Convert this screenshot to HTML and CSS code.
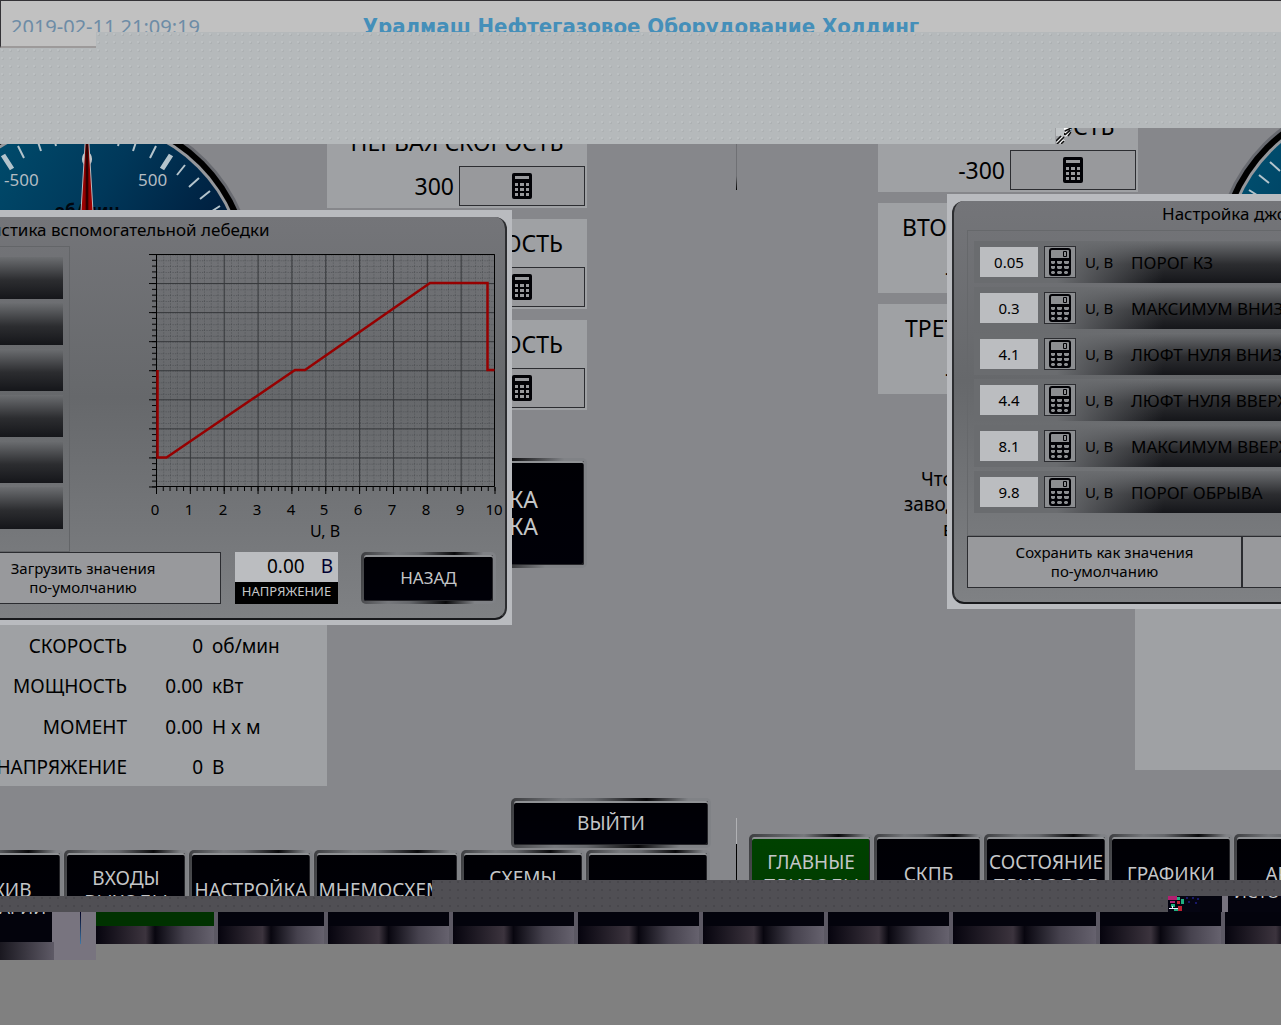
FILE: index.html
```html
<!DOCTYPE html>
<html lang="ru">
<head>
<meta charset="utf-8">
<title>Уралмаш Нефтегазовое Оборудование Холдинг</title>
<link rel="stylesheet" href="styles.css">
</head>
<body>
<svg class="defs" aria-hidden="true">
  <defs>
    <linearGradient id="face" x1="0" y1="0" x2="1" y2="0.6">
      <stop offset="0.1" stop-color="#005070"/><stop offset="0.5" stop-color="#00385a"/><stop offset="0.8" stop-color="#002040"/>
    </linearGradient>
    <linearGradient id="needle"><stop offset="0" stop-color="#c80000"/><stop offset="0.4" stop-color="#900000"/><stop offset="0.5" stop-color="#100000"/><stop offset="0.6" stop-color="#900000"/><stop offset="1" stop-color="#c80000"/></linearGradient>
    <symbol id="gauge" viewBox="0 0 340 340">
      <circle cx="170" cy="170" r="168" fill="#686a70"/>
      <circle cx="170" cy="170" r="165" fill="#000"/>
      <circle cx="170" cy="170" r="159" fill="#96989c"/>
      <circle cx="170" cy="170" r="156" fill="url(#face)"/>
      <ellipse cx="190" cy="188" rx="95" ry="78" fill="#001838" opacity="0.45"/>
      <g stroke="#b4c4cc" stroke-width="2">
        <path d="M186 23l-1 13M204 26l-3 12M220 31l-4 12M239 38l-6 12M268 57l-8 10M282 70l-10 9M293 83l-10 8M303 98l-11 7M311 114l-12 6"/>
        <path d="M154 23l1 13M136 26l3 12M120 31l4 12M101 38l6 12M72 57l8 10M58 70l10 9M47 83l10 8M37 98l11 7M29 114l12 6"/>
        <path stroke-width="5" d="M254 47l-9 14M86 47l9 14"/>
      </g>
      <g fill="#b4bcc2" font-size="17"><text x="221" y="78">500</text><text x="87" y="78">-500</text></g>
      <text x="170" y="109" fill="#00060e" font-size="17" font-weight="700" text-anchor="middle">об/мин</text>
      <ellipse cx="170" cy="51" rx="5" ry="7" fill="#c8cacc"/>
      <path d="M169 20h2l9 150h-20z" fill="url(#needle)" stroke="#b8babd" stroke-width="1"/>
    </symbol>
    <symbol id="calc" viewBox="0 0 20 26">
      <path fill="#020206" fill-rule="evenodd" d="M2 0h16a2 2 0 0 1 2 2v22a2 2 0 0 1-2 2H2a2 2 0 0 1-2-2V2a2 2 0 0 1 2-2zM3 3v3h14V3zM3 10v3h3v-3zM8 10v3h4v-3zM14 10v3h3v-3zM3 15v3h3v-3zM8 15v3h4v-3zM14 15v3h3v-3zM3 20v3h3v-3zM8 20v3h4v-3zM14 20v3h3v-3z"/>
    </symbol>
    <symbol id="pad" viewBox="0 0 22 28">
      <path fill="#020206" fill-rule="evenodd" d="M3 0h16a3 3 0 0 1 3 3v22a3 3 0 0 1-3 3H3a3 3 0 0 1-3-3V3a3 3 0 0 1 3-3zM3 2a1 1 0 0 0-1 1v7h18V3a1 1 0 0 0-1-1zM2 13v2l1 1h2l1-1v-2zM8 13v2l1 1h3l1-1v-2zM15 13v2l1 1h3l1-1v-2zM2 18v2l1 1h2l1-1v-2zM8 18v2l1 1h3l1-1v-2zM15 18v2l1 1h3l1-1v-2zM3 23l-1 1v1l1 1h2l1-1v-1l-1-1zM9 23l-1 1v1l1 1h3l1-1v-1l-1-1zM16 23l-1 1v1l1 1h2l1-1v-1l-1-1z"/>
      <path fill="none" stroke="#020206" d="M14.500 3.500h3v5h-3z"/>
    </symbol>
    <pattern id="minor" x="156.500" y="254.500" width="6.780" height="5.810" patternUnits="userSpaceOnUse"><path d="M.5 0v5.810M0 .5h6.780" stroke="#404246" stroke-width="1" stroke-dasharray="1 1.500" opacity="0.7"/></pattern>
    <pattern id="major" x="156" y="254" width="33.850" height="29.060" patternUnits="userSpaceOnUse"><path d="M.5 0v30M0 .5h34" stroke="#36383b" stroke-width="1"/></pattern>
    <pattern id="xminor" x="156" y="487" width="6.770" height="9" patternUnits="userSpaceOnUse"><path d="M.5 0v4" stroke="#000"/></pattern>
    <pattern id="xmajor" x="156" y="487" width="33.850" height="9" patternUnits="userSpaceOnUse"><path d="M.5 0v7" stroke="#000"/></pattern>
    <pattern id="yminor" x="149" y="254" width="8" height="5.810" patternUnits="userSpaceOnUse"><path d="M3 .5h5" stroke="#000"/></pattern>
    <pattern id="ymajor" x="149" y="254" width="8" height="29.060" patternUnits="userSpaceOnUse"><path d="M0 .5h8" stroke="#000"/></pattern>
  </defs>
</svg>

<header class="top">
  <time class="clock" datetime="2019-02-11T21:09:19">2019-02-11 21:09:19</time>
  <h1 class="company">Уралмаш Нефтегазовое Оборудование Холдинг</h1>
</header>
<div class="band"><span class="band-corner"></span></div>

<main class="desk">
  <section class="screen">
    <div class="work">
      <div class="side">
        <div class="dial"><svg class="gauge" width="340" height="340"><use href="#gauge"/></svg></div>
        <table class="readings">
          <tr><th scope="row">СКОРОСТЬ</th><td class="num">0</td><td>об/мин</td></tr>
          <tr><th scope="row">МОЩНОСТЬ</th><td class="num">0.00</td><td>кВт</td></tr>
          <tr><th scope="row">МОМЕНТ</th><td class="num">0.00</td><td>Н x м</td></tr>
          <tr><th scope="row">НАПРЯЖЕНИЕ</th><td class="num">0</td><td>В</td></tr>
        </table>
      </div>
      <div class="speeds">
        <div class="speed"><h2>ПЕРВАЯ СКОРОСТЬ</h2><div class="set"><output>300</output><button class="edit" aria-label="Ввод"><svg width="20" height="26"><use href="#calc"/></svg></button></div></div>
        <div class="speed"><h2 class="tail">ОСТЬ</h2><div class="set"><button class="edit" aria-label="Ввод"><svg width="20" height="26"><use href="#calc"/></svg></button></div></div>
        <div class="speed"><h2 class="tail">ОСТЬ</h2><div class="set"><button class="edit" aria-label="Ввод"><svg width="20" height="26"><use href="#calc"/></svg></button></div></div>
        <button class="metal joystick">КА<br>КА</button>
      </div>
    </div>
    <div class="exit-row"><button class="metal exit">ВЫЙТИ</button></div>
    <nav class="tabs">
      <button class="metal tab first">АРХИВ</button>
      <button class="metal tab">ВХОДЫ<br>ВЫХОДЫ</button>
      <button class="metal tab">НАСТРОЙКА</button>
      <button class="metal tab wide">МНЕМОСХЕМА</button>
      <button class="metal tab">СХЕМЫ<br>СВЯЗИ</button>
      <button class="metal tab" aria-label="Пусто"></button>
    </nav>

    <div class="dialog dialog-left">
      <div class="dialog-body">
        <h2 class="dialog-title">истика вспомогательной лебедки</h2>
        <div class="rows-stub"><i></i><i></i><i></i><i></i><i></i><i></i></div>
        <div class="actions">
          <button class="flat load">Загрузить значения<br>по-умолчанию</button>
          <div class="volt"><div class="volt-value"><output>0.00</output><span>В</span></div><div class="volt-name">НАПРЯЖЕНИЕ</div></div>
          <button class="metal back">НАЗАД</button>
        </div>
      </div>
      <svg class="chart" viewBox="140 245 370 300" width="370" height="300" role="img" aria-label="График">
        <path fill="url(#minor)" d="M156 254h339v233H156z"/>
        <path fill="url(#major)" d="M156 254h339v233H156z"/>
        <path fill="none" stroke="#000" d="M156.500 254.500h338v232h-338z"/>
        <path fill="url(#xminor)" d="M156 487h340v9H156z"/>
        <path fill="url(#xmajor)" d="M156 487h340v9H156z"/>
        <path fill="url(#yminor)" d="M149 254h8v234h-8z"/>
        <path fill="url(#ymajor)" d="M149 254h8v234h-8z"/>
        <path fill="none" stroke="#960000" stroke-width="2.500" d="M157.500 370v87.500h9L295 370h10l125-87h57.500v87h7"/>
        <g font-size="15" text-anchor="middle">
          <text x="155" y="515">0</text><text x="189" y="515">1</text><text x="223" y="515">2</text><text x="257" y="515">3</text><text x="291" y="515">4</text><text x="324" y="515">5</text><text x="358" y="515">6</text><text x="392" y="515">7</text><text x="426" y="515">8</text><text x="460" y="515">9</text><text x="494" y="515">10</text>
          <text x="325" y="537" font-size="16">U, В</text>
        </g>
      </svg>
    </div>
  </section>

  <section class="screen right">
    <div class="work">
      <div class="speeds">
        <div class="speed"><h2>ПЕРВАЯ СКОРОСТЬ</h2><div class="set"><output>-300</output><button class="edit" aria-label="Ввод"><svg width="20" height="26"><use href="#calc"/></svg></button></div></div>
        <div class="speed"><h2>ВТОРАЯ СКОРОСТЬ</h2><div class="set"><output>-1000</output><button class="edit" aria-label="Ввод"></button></div></div>
        <div class="speed"><h2>ТРЕТЬЯ СКОРОСТЬ</h2><div class="set"><output>-1000</output><button class="edit" aria-label="Ввод"></button></div></div>
        <p class="hint"><span>Что</span><span>завод</span><span>в</span></p>
      </div>
      <div class="side">
        <div class="dial"><svg class="gauge" width="340" height="340"><use href="#gauge"/></svg></div>
        <div class="blank"></div>
      </div>
    </div>
    <nav class="tabs">
      <button class="metal tab green">ГЛАВНЫЕ<br>ПРИВОДЫ</button>
      <button class="metal tab short">СКПБ</button>
      <button class="metal tab">СОСТОЯНИЕ<br>ПРИВОДОВ</button>
      <button class="metal tab">ГРАФИКИ</button>
      <button class="metal tab">АРХИВ</button>
    </nav>

    <div class="dialog dialog-right">
      <div class="dialog-body">
        <h2 class="dialog-title">Настройка джойстика</h2>
        <div class="params">
          <div class="param"><input id="p1" value="0.05"><button class="pad" aria-label="Ввод"><svg width="22" height="28"><use href="#pad"/></svg></button><span class="unit">U, В</span><label for="p1">ПОРОГ КЗ</label></div>
          <div class="param"><input id="p2" value="0.3"><button class="pad" aria-label="Ввод"><svg width="22" height="28"><use href="#pad"/></svg></button><span class="unit">U, В</span><label for="p2">МАКСИМУМ ВНИЗ</label></div>
          <div class="param"><input id="p3" value="4.1"><button class="pad" aria-label="Ввод"><svg width="22" height="28"><use href="#pad"/></svg></button><span class="unit">U, В</span><label for="p3">ЛЮФТ НУЛЯ ВНИЗ</label></div>
          <div class="param"><input id="p4" value="4.4"><button class="pad" aria-label="Ввод"><svg width="22" height="28"><use href="#pad"/></svg></button><span class="unit">U, В</span><label for="p4">ЛЮФТ НУЛЯ ВВЕРХ</label></div>
          <div class="param"><input id="p5" value="8.1"><button class="pad" aria-label="Ввод"><svg width="22" height="28"><use href="#pad"/></svg></button><span class="unit">U, В</span><label for="p5">МАКСИМУМ ВВЕРХ</label></div>
          <div class="param"><input id="p6" value="9.8"><button class="pad" aria-label="Ввод"><svg width="22" height="28"><use href="#pad"/></svg></button><span class="unit">U, В</span><label for="p6">ПОРОГ ОБРЫВА</label></div>
        </div>
        <div class="actions">
          <button class="flat save">Сохранить как значения<br>по-умолчанию</button>
          <button class="flat save" aria-label="Загрузить"></button>
        </div>
      </div>
    </div>
  </section>

  <span class="cover cover-top"></span>
  <svg class="noise noise-top" width="16" height="16" viewBox="0 0 16 16"><path fill="#c0c4c6" d="M0 0h8v8H0z"/><path stroke="#fff" stroke-width="2" d="M8 1l7-1M9 5l6-4M9 8l6-4M1 15l6-6M4 16l4-4"/><path stroke="#111" stroke-width="1.500" d="M9 3l6-3M9 7l5-5M12 8l3-4M0 13l5-5M1 16l7-7M5 16l3-3"/></svg>
  <span class="cover cover-bottom"></span>
</main>

<div class="strip">
  <div class="strip-fill"></div>
  <svg width="32" height="16" viewBox="0 0 32 16"><path fill="#050512" d="M0 0h32v16H0z"/><path fill="#b02070" d="M0 0h9v4H0zM2 5h5v2H2z"/><path fill="#20b080" d="M9 1h3v3H9zM13 3h3v5h-3zM3 8h4v3H3zM6 13h4v2H6z"/><path fill="#c02030" d="M9 5h3v3H9zM10 10h4v5h-4z"/><path fill="#eef" d="M1 12h9v1H1zM4 10h1v2H4z"/><path fill="#18186a" d="M18 1h2v2h-2zM24 1h2v2h-2zM29 2h2v2h-2zM20 5h2v2h-2zM27 6h2v2h-2z"/></svg>
  <div class="strip-key"></div>
  <div class="strip-key last">ИСТОРИЯ</div>
</div>

<footer class="keys">
  <div class="corner"><div class="corner-key">АВАРИЙ</div><span class="corner-line"></span></div>
  <div class="key green"></div><div class="key short"></div><div class="key"></div><div class="key"></div><div class="key"></div><div class="key"></div><div class="key"></div><div class="key wide"></div><div class="key"></div><div class="key"></div>
</footer>
</body>
</html>
```
FILE: styles.css
```css
* { box-sizing: border-box; }
body {
  margin: 0;
  min-height: 100vh;
  overflow-x: hidden;
  background: #808080;
  color: #000;
  font-family: "Noto Sans", "Open Sans", sans-serif;
  font-size: 19px;
}
h1, h2, p { margin: 0; font-weight: 400; }
button, input { font: inherit; color: inherit; margin: 0; padding: 0; border-radius: 0; }
button svg { display: block; margin: 0 auto; }
.defs { position: absolute; width: 0; height: 0; }

/* header */
.top {
  display: grid;
  grid-template-columns: 1fr auto 1fr;
  height: 32px;
  padding: 12px 10px 0;
  overflow: hidden;
  border-top: 1px solid #333236;
  border-left: 1px solid #333236;
  background: #c1c1c1;
  line-height: 28px;
}
.clock { color: #6d8ca6; font-size: 20px; }
.company { color: #458fb9; font: bold 22px/28px "DejaVu Sans Condensed", "Noto Sans", sans-serif; }
.band, .cover-top {
  background: radial-gradient(circle at 2px 2px, #bcc0c2 0 1px, transparent 1px) 0 0 / 8px 8px,
    radial-gradient(circle at 3px 3px, #adb1b3 0 1px, transparent 1px) 0 0 / 8px 8px, #b5b9bb;
}
.band { height: 96px; }
.band-corner { display: block; width: 96px; height: 16px; background: #c1c1c1; border-bottom: 2px solid #9d9a9a; border-left: 1px solid #333236; }

/* the two screens */
.desk { position: relative; display: grid; grid-template-columns: 737fr 544fr; background: #86878b; }
.screen { position: relative; display: flex; flex-direction: column; min-width: 0; overflow: hidden; }
.screen.right {
  margin-left: -1px;
  background: linear-gradient(transparent 16px, #6f7074 16px 48px, #000 62px, transparent 62px 690px, #b0b1b4 690px 716px, #000 716px) 0 0 / 1px 100% no-repeat;
}
.work { display: flex; }
.side { width: 327px; display: flex; flex-direction: column; overflow: hidden; }
.dial { height: 497px; overflow: hidden; }
.gauge { display: block; margin: -20px 0 0 -83px; }
.readings { width: 327px; height: 161px; border-spacing: 0; background: #9fa1a4; table-layout: fixed; }
.readings th { width: 127px; text-align: right; direction: rtl; }
.readings .num { width: 76px; text-align: right; }
.readings th, .readings td { height: 40px; padding: 2px 0 0; font-weight: 400; white-space: nowrap; }
.readings td:last-child { padding-left: 9px; }
.speeds { width: 260px; margin-top: -10px; display: flex; flex-direction: column; gap: 11px; }
.speed { height: 90px; background: #9fa1a4; font-size: 23px; padding: 0 2px 2px; }
.speed h2 { font-size: 23px; line-height: 48px; text-align: center; white-space: nowrap; }
.speed .tail { padding-right: 22px; text-align: right; }
.set { display: flex; justify-content: flex-end; align-items: center; gap: 5px; height: 40px; }
.edit { width: 126px; height: 40px; border: 1px solid #2c2d31; background: #98999c; }
.metal {
  border: 3px solid transparent;
  border-radius: 5px;
  color: #c4c6c8;
  line-height: 24px;
  white-space: nowrap;
  background: linear-gradient(#000004, #000008) padding-box,
    linear-gradient(100deg, #3c3d40, #77797d 25%, #66686c 40%, #08080a 65%, #808286 85%) border-box;
  box-shadow: inset 0 2px #8f9194, inset -1px -1px #26262a;
}
.joystick { height: 110px; margin-top: 37px; padding-right: 46px; font-size: 23px; line-height: 27px; text-align: right; }
.exit-row { display: flex; padding: 12px 26px 2px 0; justify-content: flex-end; }
.exit { width: 200px; height: 50px; }
.tabs { display: flex; gap: 1px; height: 46px; padding-right: 28px; overflow: hidden; }
.tab { flex: none; width: 124px; height: 80px; }
.tab.first { margin-left: -61px; }
.tab.wide { width: 146px; }
.tab.short { width: 109px; }
.tab.green { background: linear-gradient(#004200, #003a00) padding-box, linear-gradient(100deg, #3c3d40, #77797d 40%, #08080a 65%, #808286 85%) border-box; }

.right .work { padding-left: 142px; }
.right .speeds { flex: none; margin-top: -26px; }
.right .side { flex: 1 0 146px; margin-left: -3px; }
.right .dial { height: 481px; }
.right .gauge { margin: -36px 0 0 77px; }
.blank { height: 161px; background: #9fa1a4; }
.right .tabs { height: 62px; margin-top: auto; padding: 0 0 0 13px; }
.hint { display: flex; flex-direction: column; margin: 62px 0 0 26px; line-height: 25px; }
.hint span:nth-child(1) { padding-left: 17px; }
.hint span:nth-child(3) { padding-left: 39px; }

/* dialogs over the screens */
.dialog { position: absolute; height: 415px; background: #b9bbbf; overflow: hidden; }
.dialog-left { left: 0; top: 82px; width: 512px; padding: 7px 5px 5px 0; }
.dialog-right { left: 211px; right: 0; top: 66px; padding: 7px 0 5px 5px; }
.dialog-body {
  height: 100%;
  display: flex;
  flex-direction: column;
  overflow: hidden;
  border-bottom: 2px solid #18191c;
  background: linear-gradient(#747579, #66686b 45%, #7f8184);
}
.dialog-left .dialog-body { border-right: 2px solid #2c2d30; border-radius: 0 12px 12px 0; }
.dialog-right .dialog-body { border-left: 2px solid #2c2d30; border-radius: 12px 0 0 12px; padding-left: 13px; }
.dialog-title { height: 29px; font-size: 17px; line-height: 25px; white-space: nowrap; }
.dialog-left .dialog-title { margin-left: -9px; }
.dialog-right .dialog-title { padding-left: 195px; }
.rows-stub { display: flex; flex-direction: column; gap: 4px; width: 70px; height: 306px; padding-top: 10px; border: 1px solid #636568; border-left: 0; }
.rows-stub i { width: 63px; height: 42px; background: linear-gradient(#6c6e71, #2c2d30 55%, #15161a); }
.chart { position: absolute; left: 140px; top: 35px; }
.actions { display: flex; flex: none; }
.flat { flex: none; height: 52px; border: 1px solid #2b2c30; background: #98999c; font-size: 15px; line-height: 19px; }
.load { width: 276px; margin-left: -55px; }
.save { width: 275px; }
.volt { width: 103px; margin: 0 23px 0 14px; }
.volt-value { display: flex; justify-content: flex-end; gap: 16px; height: 30px; padding-right: 5px; background: #bbbdc0; line-height: 28px; }
.volt-value span { color: #000030; }
.volt-name { height: 22px; background: #000; color: #c4c6c8; font-size: 13px; line-height: 19px; text-align: center; }
.back { width: 135px; height: 52px; font-size: 17px; }
.params { display: flex; flex-direction: column; gap: 4px; height: 306px; padding: 10px 0 0 6px; border: 1px solid #66686b; border-right: 0; }
.param {
  display: flex;
  align-items: center;
  flex: none;
  height: 42px;
  padding-left: 6px;
  font-size: 17px;
  white-space: nowrap;
  background: linear-gradient(96deg, #6a6c6f 28%, transparent 62%), linear-gradient(#6c6e71, #2c2d30 55%, #15161a);
}
.param > * { flex: none; }
.param input { width: 58px; height: 30px; border: 0; background: #bbbdc0; text-align: center; font-size: 15px; }
.pad { width: 32px; height: 32px; margin: 0 9px 0 6px; border: 1px solid #2c2d31; background: #8c8e91; }
.unit { width: 46px; font-size: 15px; }

/* covering strips */
.cover { position: absolute; height: 16px; }
.cover-top { left: 0; top: 0; width: 1055px; }
.noise { position: absolute; }
.noise-top { left: 1056px; top: 0; }
.cover-bottom, .strip-fill {
  background: radial-gradient(circle at 2px 2px, #48474c 0 1px, transparent 1px) 0 0 / 8px 8px, #504f54;
}
.cover-bottom { left: 432px; right: 0; bottom: 0; }
.strip { display: flex; height: 16px; overflow: hidden; background: #77737e; }
.strip-fill { flex: 1; }
.strip-key { width: 22px; background: #04040e; }
.strip-key.last { width: 53px; height: 20px; margin: -4px 0 0 6px; padding-left: 6px; color: #c4c6c8; line-height: 0; font-size: 17px; }

/* lower row of keys */
.keys { display: flex; align-items: flex-start; height: 48px; overflow: hidden; }
.corner { display: flex; flex: none; width: 96px; height: 48px; background: #78747f; }
.corner-key {
  display: flex;
  justify-content: flex-end;
  width: 54px;
  height: 52px;
  margin-top: -4px;
  padding-right: 8px;
  color: #c4c6c8;
  line-height: 0;
  font-size: 17px;
  background: linear-gradient(#03030c, #03030c) 0 0 / 52px 34px no-repeat,
    linear-gradient(90deg, #1a1820, #5e5a66) 0 34px / 100% 18px no-repeat;
}
.corner-line { width: 1px; height: 32px; margin-left: 26px; background: linear-gradient(#000020, #3f78a8); }
.key {
  flex: none;
  width: 125px;
  height: 32px;
  border-right: 4px solid #5c5964;
  background: linear-gradient(#03030c, #03030c) 0 0 / 100% 14px no-repeat,
    linear-gradient(90deg, #06040e, #3c343e 42%, #08060f 50%, #46424e 75%, #66626e) 0 14px / 100% 18px no-repeat;
}
.key.green { width: 122px; background: linear-gradient(#003200, #003200) 0 0 / 100% 14px no-repeat, linear-gradient(90deg, #06040e, #3c343e 42%, #08060f 50%, #46424e 75%, #66626e) 0 14px / 100% 18px no-repeat; }
.key.short { width: 110px; }
.key.wide { width: 147px; }
```
